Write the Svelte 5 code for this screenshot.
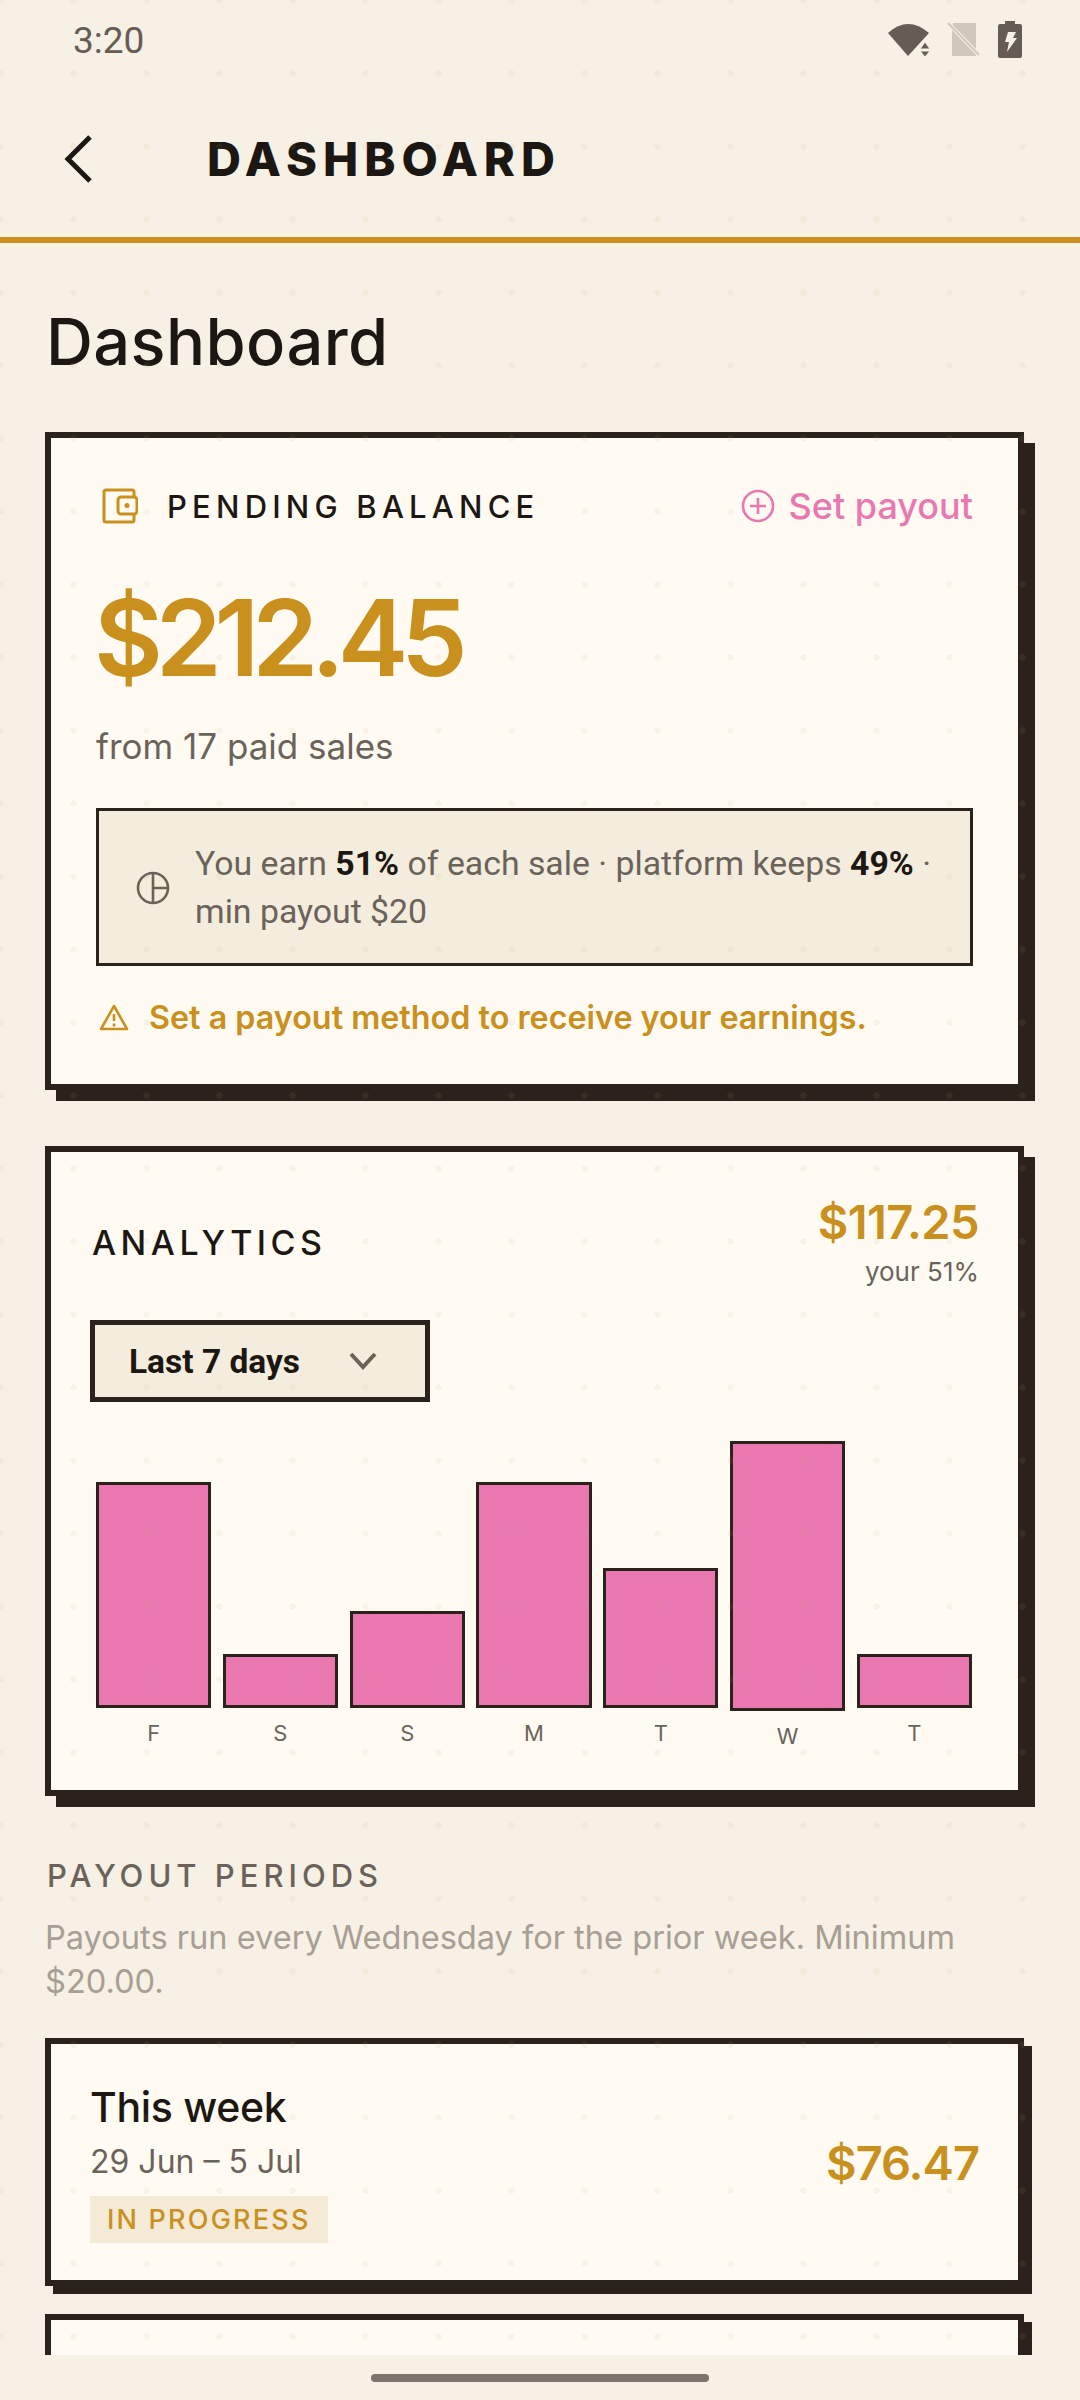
<script>
  const bars = [
    { day: 'F', top: 41, height: 226 },
    { day: 'S', top: 213, height: 54 },
    { day: 'S', top: 170, height: 97 },
    { day: 'M', top: 41, height: 226 },
    { day: 'T', top: 127, height: 140 },
    { day: 'W', top: 0, height: 270 },
    { day: 'T', top: 213, height: 54 }
  ];
</script>

<div class="phone">
  <div class="screen">
    <div class="status">
      <span class="time">3:20</span>
      <div class="status-icons">
        <svg class="wifi" width="44" height="36" viewBox="0 0 44 36">
          <path d="M1 11 Q21 -7 42 11 L21 34 Z" fill="#665c53" />
          <path d="M38 20 L43 27 L33 27 Z M33 29 L43 29 L38 35 Z" fill="#665c53" stroke="#f7f0e4" stroke-width="1" />
        </svg>
        <svg class="sim" width="34" height="36" viewBox="0 0 34 36">
          <path d="M6 1 H29 V34 H5 V6 Z" fill="#cfc8bc" />
          <path d="M1 1 L32 33" stroke="#f7f0e4" stroke-width="4" />
          <path d="M1 1 L32 33" stroke="#cfc8bc" stroke-width="2" />
        </svg>
        <svg class="batt" width="26" height="38" viewBox="0 0 26 38">
          <path d="M8 0 H18 V3 H23 Q25 3 25 5 V35 Q25 37 23 37 H3 Q1 37 1 35 V5 Q1 3 3 3 H8 Z" fill="#665c53" />
          <path d="M11 11 H19 L16 17 H20 L10 31 L12 21 H8 Z" fill="#f7f0e4" />
        </svg>
      </div>
    </div>

    <header class="appbar">
      <svg class="back" width="30" height="48" viewBox="0 0 30 48">
        <path d="M26 2 L4 24 L26 46" fill="none" stroke="#1c1712" stroke-width="5" />
      </svg>
      <span class="appbar-title">DASHBOARD</span>
    </header>

    <main class="content">
      <h1>Dashboard</h1>

      <section class="card balance">
        <div class="balance-head">
          <svg class="wallet" width="36" height="36" viewBox="0 0 36 36" fill="none" stroke="#c9901e" stroke-width="3">
            <path d="M32 9 V4 Q32 2 30 2 H4 Q2 2 2 4 V32 Q2 34 4 34 H30 Q32 34 32 32 V26" />
            <rect x="16" y="9" width="19" height="17" rx="3" />
            <circle cx="25" cy="17.5" r="2.5" fill="#c9901e" stroke="none" />
          </svg>
          <span class="label">PENDING BALANCE</span>
          <span class="set-payout">
            <svg width="34" height="34" viewBox="0 0 34 34" fill="none" stroke="#ea78b0" stroke-width="2.6">
              <circle cx="17" cy="17" r="15" />
              <path d="M17 9 V25 M9 17 H25" />
            </svg>
            Set payout
          </span>
        </div>
        <div class="amount">$212.45</div>
        <div class="from">from 17 paid sales</div>
        <div class="split">
          <svg width="34" height="34" viewBox="0 0 34 34" fill="none" stroke="#6b635a" stroke-width="2.6">
            <circle cx="17" cy="17" r="15" />
            <path d="M17 2 V32 M17 17 H32" />
          </svg>
          <p>You earn <b>51%</b> of each sale · platform keeps <b>49%</b> · min payout $20</p>
        </div>
        <div class="warn">
          <svg width="30" height="28" viewBox="0 0 30 28" fill="none" stroke="#c9901e" stroke-width="2.6" stroke-linejoin="round">
            <path d="M15 2 L28 25 H2 Z" />
            <path d="M15 10 V17 M15 19.5 V22.5" />
          </svg>
          <span>Set a payout method to receive your earnings.</span>
        </div>
      </section>

      <section class="card analytics">
        <div class="analytics-head">
          <span class="label big">ANALYTICS</span>
          <div class="analytics-sum">
            <div class="sum">$117.25</div>
            <div class="sum-note">your 51%</div>
          </div>
        </div>
        <div class="select">
          <span>Last 7 days</span>
          <svg width="28" height="18" viewBox="0 0 28 18" fill="none" stroke="#6b635a" stroke-width="4">
            <path d="M2 2 L14 15 L26 2" />
          </svg>
        </div>
        <div class="chart">
          {#each bars as b}
            <div class="col" style="padding-top: {b.top}px">
              <div class="bar" style="height: {b.height}px"></div>
              <span class="day">{b.day}</span>
            </div>
          {/each}
        </div>
      </section>

      <h2>PAYOUT PERIODS</h2>
      <p class="note">Payouts run every Wednesday for the prior week. Minimum $20.00.</p>

      <section class="card period">
        <div>
          <div class="period-name">This week</div>
          <div class="period-date">29 Jun – 5 Jul</div>
          <span class="badge">IN PROGRESS</span>
        </div>
        <div class="period-sum">$76.47</div>
      </section>

      <section class="card period next"></section>
    </main>

    <div class="dots"></div>
  </div>

  <div class="navbar"><div class="handle"></div></div>
</div>

<style>
  :global(body) {
    margin: 0;
    background: #f7f0e4;
  }
  .phone {
    width: 1080px;
    height: 2400px;
    display: flex;
    flex-direction: column;
    background: #f7f0e4;
    color: #1c1712;
    font-family: Inter, "Liberation Sans", sans-serif;
    overflow: hidden;
  }
  .screen {
    position: relative;
    flex: 1;
    min-height: 0;
    display: flex;
    flex-direction: column;
    overflow: hidden;
  }
  .dots {
    position: absolute;
    inset: 0;
    pointer-events: none;
    background-image: radial-gradient(circle at 3.5px 3.5px, rgba(190, 165, 110, 0.09) 3px, transparent 3.5px);
    background-size: 73px 73px;
    background-position: -3px -3px;
  }
  .status {
    height: 80px;
    display: flex;
    align-items: center;
    justify-content: space-between;
    padding: 0 57px 0 73px;
    flex: none;
  }
  .time {
    font-family: Roboto, sans-serif;
    font-size: 37px;
    color: #665c53;
  }
  .status-icons {
    display: flex;
    align-items: center;
    gap: 16px;
  }
  .appbar {
    flex: none;
    height: 163px;
    box-sizing: border-box;
    display: flex;
    align-items: center;
    padding-left: 64px;
    border-bottom: 6px solid #c9901e;
  }
  .back {
    flex: none;
  }
  .appbar-title {
    margin-left: 113px;
    font-size: 47px;
    font-weight: 800;
    letter-spacing: 6px;
  }
  .content {
    flex: 1;
    min-height: 0;
    padding: 0 45px;
    overflow: hidden;
  }
  h1 {
    margin: 59px 0 0 1px;
    font-size: 65px;
    line-height: 80px;
    font-weight: 500;
    letter-spacing: 0.4px;
  }
  .card {
    box-sizing: border-box;
    width: 979px;
    border: 6px solid #2c221c;
    background: #fffbf3;
    box-shadow: 11px 11px 0 #2c221c;
  }
  .balance {
    margin-top: 50px;
    height: 658px;
    padding: 46px 45px 0;
  }
  .balance-head {
    display: flex;
    align-items: center;
    height: 44px;
    padding-left: 6px;
  }
  .label {
    margin-left: 29px;
    font-size: 31px;
    font-weight: 500;
    letter-spacing: 5.2px;
  }
  .set-payout {
    margin-left: auto;
    display: flex;
    align-items: center;
    gap: 14px;
    color: #ea78b0;
    font-size: 36px;
    font-weight: 500;
  }
  .amount {
    margin: 50px 0 0 -2px;
    font-size: 106px;
    line-height: 120px;
    font-weight: 600;
    color: #c9901e;
    letter-spacing: -7.2px;
  }
  .from {
    margin-top: 26px;
    font-size: 35px;
    line-height: 44px;
    color: #6b635a;
  }
  .split {
    margin-top: 40px;
    box-sizing: border-box;
    height: 158px;
    border: 3px solid #2c221c;
    background: #f4ecdd;
    display: flex;
    align-items: center;
    gap: 25px;
    padding: 2px 20px 0 37px;
  }
  .split svg {
    flex: none;
  }
  .split p {
    margin: 0;
    font-family: Roboto, sans-serif;
    font-size: 33.8px;
    line-height: 48px;
    color: #6b635a;
  }
  .split b {
    color: #1c1712;
    font-weight: 700;
  }
  .warn {
    margin-top: 32px;
    display: flex;
    align-items: center;
    gap: 20px;
    padding-left: 3px;
    color: #c9901e;
    font-size: 32.3px;
    font-weight: 600;
  }
  .analytics {
    margin-top: 56px;
    height: 650px;
    padding: 0 39px;
  }
  .analytics-head {
    display: flex;
    justify-content: space-between;
    align-items: flex-start;
    padding-top: 42px;
    height: 168px;
    box-sizing: border-box;
  }
  .label.big {
    margin: 28px 0 0 2px;
    font-size: 34px;
    letter-spacing: 4.5px;
  }
  .analytics-sum {
    text-align: right;
  }
  .sum {
    font-size: 47px;
    line-height: 56px;
    font-weight: 600;
    color: #c9901e;
    letter-spacing: -0.6px;
  }
  .sum-note {
    margin-top: 4px;
    font-size: 26px;
    line-height: 36px;
    color: #6b635a;
  }
  .select {
    box-sizing: border-box;
    width: 340px;
    height: 82px;
    border: 5px solid #2c221c;
    background: #f4ecdd;
    display: flex;
    align-items: center;
    justify-content: space-between;
    padding: 0 48px 0 34px;
    font-family: Roboto, sans-serif;
    font-size: 33.5px;
    font-weight: 700;
  }
  .chart {
    margin: 39px 7px 0 6px;
    display: flex;
    gap: 11.5px;
  }
  .col {
    flex: 1;
    display: flex;
    flex-direction: column;
    align-items: stretch;
    box-sizing: border-box;
  }
  .bar {
    box-sizing: border-box;
    background: #ea78b0;
    border: 3px solid #2c221c;
  }
  .day {
    margin-top: 11px;
    text-align: center;
    font-size: 22px;
    line-height: 28px;
    color: #6b635a;
  }
  h2 {
    margin: 60px 0 0 2px;
    font-size: 31px;
    line-height: 40px;
    font-weight: 500;
    letter-spacing: 5px;
    color: #6b635a;
  }
  .note {
    margin: 19px 0 0;
    width: 960px;
    font-size: 32.6px;
    line-height: 44px;
    color: #a89f94;
  }
  .period {
    margin-top: 35px;
    height: 248px;
    box-shadow: 8px 8px 0 #2c221c;
    padding: 0 39px;
    display: flex;
    align-items: center;
    justify-content: space-between;
  }
  .period-name {
    font-size: 41px;
    line-height: 52px;
    font-weight: 500;
    letter-spacing: -0.3px;
  }
  .period-date {
    margin-top: 9px;
    font-size: 32px;
    line-height: 40px;
    color: #6b635a;
  }
  .badge {
    display: inline-block;
    margin-top: 14px;
    padding: 0 17px;
    height: 47px;
    line-height: 47px;
    background: #f4ead6;
    color: #c9901e;
    font-size: 27px;
    font-weight: 500;
    letter-spacing: 2.2px;
  }
  .period-sum {
    font-size: 47px;
    font-weight: 600;
    color: #c9901e;
    letter-spacing: -1px;
  }
  .next {
    margin-top: 28px;
  }
  .navbar {
    flex: none;
    height: 45px;
    display: flex;
    align-items: center;
    justify-content: center;
    background: #f7f0e4;
  }
  .handle {
    width: 338px;
    height: 8px;
    border-radius: 4px;
    background: #7d756c;
  }
</style>
